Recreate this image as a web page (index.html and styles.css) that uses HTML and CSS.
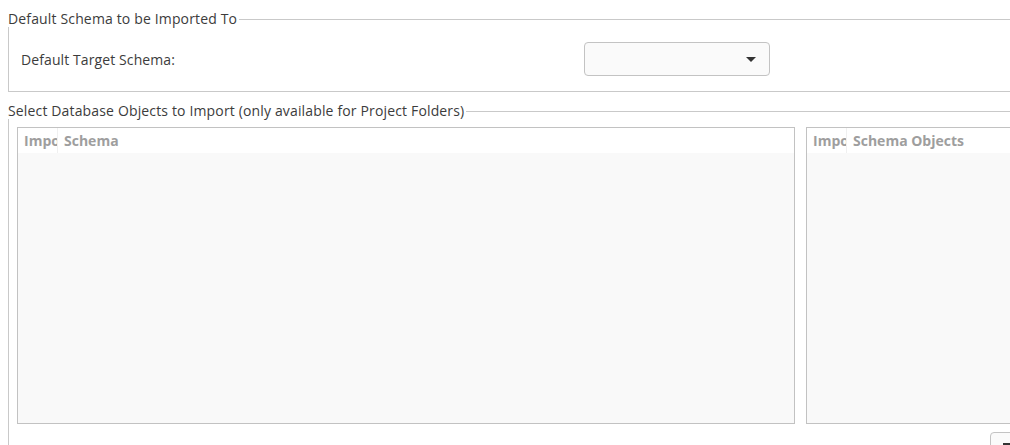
FILE: index.html
```html
<!DOCTYPE html>
<html>
<head>
<meta charset="utf-8">
<link rel="stylesheet" href="styles.css">
</head>
<body>
<div class="page">
  <section class="frame frame-target">
    <div class="frame-title"><span class="frame-label">Default Schema to be Imported To</span><span class="frame-rule"></span></div>
    <div class="frame-body target-body">
      <span class="field-label">Default Target Schema:</span>
      <div class="combo"><span class="combo-arrow"></span></div>
    </div>
  </section>
  <section class="frame frame-objects">
    <div class="frame-title"><span class="frame-label">Select Database Objects to Import (only available for Project Folders)</span><span class="frame-rule"></span></div>
    <div class="frame-body objects-body">
      <div class="lists">
        <div class="list list-schema">
          <div class="list-head"><span class="col col-import">Impo</span><span class="col col-name">Schema</span></div>
          <div class="list-rows"></div>
        </div>
        <div class="list list-objects">
          <div class="list-head"><span class="col col-import">Impo</span><span class="col col-name">Schema Objects</span></div>
          <div class="list-rows"></div>
        </div>
      </div>
      <div class="actions"><div class="btn"><span class="btn-glyph"></span></div></div>
    </div>
  </section>
</div>
</body>
</html>
```
FILE: styles.css
```css
html, body {
  margin: 0;
  padding: 0;
  background: #ffffff;
  overflow: hidden;
}
body {
  width: 1010px;
  height: 445px;
  font-family: "Open Sans", "Liberation Sans", sans-serif;
  font-size: 14px;
  color: #3c3c3c;
}
.page {
  width: 1040px;
  padding-left: 8px;
  padding-top: 11px;
}
.frame-title {
  display: flex;
  align-items: center;
  height: 16px;
}
.frame-label {
  white-space: nowrap;
  line-height: 16px;
  letter-spacing: 0.15px;
}
.frame-rule {
  flex: 1;
  height: 1px;
  background: #c9c9c9;
  margin-left: 2px;
}
.frame-body {
  border-left: 1px solid #c9c9c9;
  border-bottom: 1px solid #c9c9c9;
}
.target-body {
  height: 65px;
  display: flex;
  align-items: center;
  padding-left: 12px;
  box-sizing: border-box;
}
.field-label {
  width: 563px;
  flex-shrink: 0;
  letter-spacing: 0.1px;
}
.combo {
  width: 186px;
  height: 34px;
  box-sizing: border-box;
  border: 1px solid #c3c3c3;
  border-radius: 4px;
  background: #fafafa;
  display: flex;
  align-items: center;
  justify-content: flex-end;
  padding-right: 13px;
  flex-shrink: 0;
}
.combo-arrow {
  width: 0;
  height: 0;
  border-left: 5px solid transparent;
  border-right: 5px solid transparent;
  border-top: 5px solid #333333;
}
.frame-objects {
  margin-top: 11px;
}
.objects-body {
  border-bottom: none;
  padding: 8px 0 0 8px;
  height: 340px;
}
.lists {
  display: flex;
  gap: 11px;
}
.list {
  border: 1px solid #c2c2c2;
  height: 295px;
  display: flex;
  flex-direction: column;
  background: #f9f9f9;
  flex-shrink: 0;
}
.list-schema {
  width: 776px;
}
.list-objects {
  width: 300px;
}
.list-head {
  height: 25px;
  background: #ffffff;
  display: flex;
  align-items: center;
  font-weight: bold;
  color: #9e9e9e;
  font-size: 14px;
}
.col-import {
  width: 33px;
  padding-left: 6px;
  overflow: hidden;
  white-space: nowrap;
  border-right: 1px solid #f0f0f0;
  height: 25px;
  line-height: 25px;
}
.col-name {
  padding-left: 6px;
  white-space: nowrap;
}
.list-rows {
  flex: 1;
}
.actions {
  display: flex;
  padding-top: 8px;
}
.btn {
  margin-left: 973px;
  flex-shrink: 0;
  width: 40px;
  height: 30px;
  border: 1px solid #c3c3c3;
  border-radius: 4px;
  background: #fafafa;
  position: relative;
}
.btn-glyph {
  position: absolute;
  left: 12px;
  top: 10px;
  width: 8px;
  height: 4px;
  background: #333;
}
```
